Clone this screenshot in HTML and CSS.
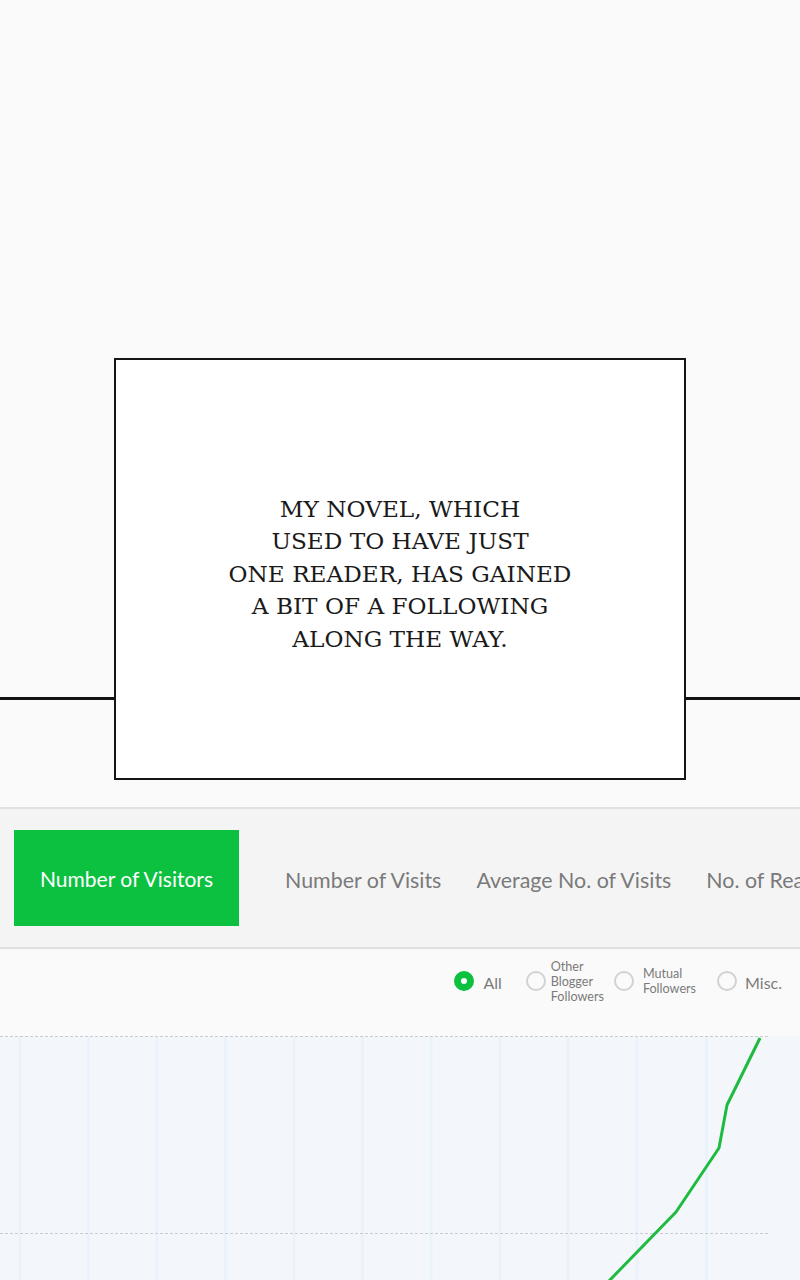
FILE: index.html
```html
<!DOCTYPE html>
<html lang="en">
<head>
<meta charset="utf-8">
<title>Stats</title>
<link rel="stylesheet" href="styles.css">
</head>
<body>
<div class="page">
  <section class="panel">
    <div class="rule"></div>
    <div class="caption">
      <p class="caption-text">MY NOVEL, WHICH<br>USED TO HAVE JUST<br>ONE READER, HAS GAINED<br>A BIT OF A FOLLOWING<br>ALONG THE WAY.</p>
    </div>
    <div class="rule"></div>
  </section>

  <nav class="tabs">
    <div class="tab tab-active">Number of Visitors</div>
    <div class="tab tab-first">Number of Visits</div>
    <div class="tab">Average No. of Visits</div>
    <div class="tab">No. of Readers</div>
  </nav>

  <div class="filters">
    <label class="opt opt-1"><span class="radio radio-on"></span><span class="opt-big">All</span></label>
    <label class="opt opt-2"><span class="radio"></span><span class="opt-small">Other<br>Blogger<br>Followers</span></label>
    <label class="opt opt-3"><span class="radio"></span><span class="opt-small">Mutual<br>Followers</span></label>
    <label class="opt opt-4"><span class="radio"></span><span class="opt-big">Misc.</span></label>
  </div>

  <div class="chart">
    <svg class="chart-svg" width="800" height="244" viewBox="0 0 800 244">
      <g class="vgrid">
        <line x1="20" y1="0" x2="20" y2="244"/>
        <line x1="88.5" y1="0" x2="88.5" y2="244"/>
        <line x1="157" y1="0" x2="157" y2="244"/>
        <line x1="225.5" y1="0" x2="225.5" y2="244"/>
        <line x1="294" y1="0" x2="294" y2="244"/>
        <line x1="362.5" y1="0" x2="362.5" y2="244"/>
        <line x1="431" y1="0" x2="431" y2="244"/>
        <line x1="500" y1="0" x2="500" y2="244"/>
        <line x1="568" y1="0" x2="568" y2="244"/>
        <line x1="637" y1="0" x2="637" y2="244"/>
        <line x1="706.5" y1="0" x2="706.5" y2="244"/>
      </g>
      <g class="hgrid">
        <line x1="0" y1="0.5" x2="770" y2="0.5"/>
        <line x1="0" y1="197.5" x2="770" y2="197.5"/>
      </g>
      <polyline class="series" points="760,2 727,69 719,112 676,176 608,246"/>
    </svg>
  </div>
</div>
</body>
</html>
```

FILE: styles.css
```css
* { box-sizing: border-box; }

html, body {
  margin: 0;
  padding: 0;
}

body {
  background: #fafafa;
  width: 800px;
  height: 1280px;
  overflow: hidden;
  font-family: "Lato", "Noto Sans", sans-serif;
}

.page {
  display: flex;
  flex-direction: column;
  width: 800px;
}

/* ---------- comic panel ---------- */
.panel {
  display: flex;
  align-items: flex-start;
  padding-top: 358px;
  height: 807px;
}

.rule {
  flex: 1;
  height: 3px;
  margin-top: 339px;
  background: #111;
}

.caption {
  width: 572px;
  height: 422px;
  border: 2px solid #151515;
  background: #fff;
  display: flex;
  align-items: center;
  justify-content: center;
  padding-top: 10px;
}

.caption-text {
  margin: 0;
  font-family: "DejaVu Serif", "Liberation Serif", serif;
  font-size: 23.2px;
  line-height: 32.5px;
  color: #1a1a1a;
  text-align: center;
  font-weight: normal;
}

/* ---------- tabs ---------- */
.tabs {
  display: flex;
  align-items: center;
  height: 142px;
  border-top: 2px solid #e0e0e0;
  border-bottom: 2px solid #e0e0e0;
  background: #f4f4f4;
  padding-left: 14px;
  white-space: nowrap;
  overflow: hidden;
}

.tab {
  font-size: 21.4px;
  color: #7a7a7a;
  padding: 3px 17px 0 18px;
  flex-shrink: 0;
}

.tab-active {
  width: 225px;
  height: 96px;
  background: #0bc13f;
  color: #fff;
  display: flex;
  align-items: center;
  justify-content: center;
  padding: 0;
  font-size: 21px;
}

.tab-first {
  margin-left: 28px;
}

/* ---------- filters ---------- */
.filters {
  display: flex;
  justify-content: flex-end;
  align-items: center;
  height: 64px;
  padding: 0 18px 0 0;
  color: #7a7a7a;
  margin-bottom: 23px;
}

.opt {
  display: flex;
  align-items: center;
}

.opt-1 { gap: 9px; }
.opt-2 { margin-left: 24px; gap: 5px; }
.opt-3 { margin-left: 10px; gap: 9px; }
.opt-4 { margin-left: 21px; gap: 8px; }

.radio {
  width: 20px;
  height: 20px;
  border-radius: 50%;
  border: 2px solid #d2d2d2;
  background: #fafafa;
  flex-shrink: 0;
}

.radio-on {
  border: 7px solid #0bc13f;
  background: #fff;
}

.opt-big {
  font-size: 16px;
  padding-top: 2px;
}

.opt-small {
  font-size: 12.6px;
  line-height: 15px;
}

/* ---------- chart ---------- */
.chart {
  height: 244px;
  background: #f3f7fb;
}

.chart-svg {
  display: block;
}

.vgrid line {
  stroke: #eaf2fb;
  stroke-width: 3;
}

.hgrid line {
  stroke: #c9cccf;
  stroke-width: 1;
  stroke-dasharray: 3 2;
}

.series {
  fill: none;
  stroke: #1fbb40;
  stroke-width: 3;
  stroke-linejoin: round;
}
```
